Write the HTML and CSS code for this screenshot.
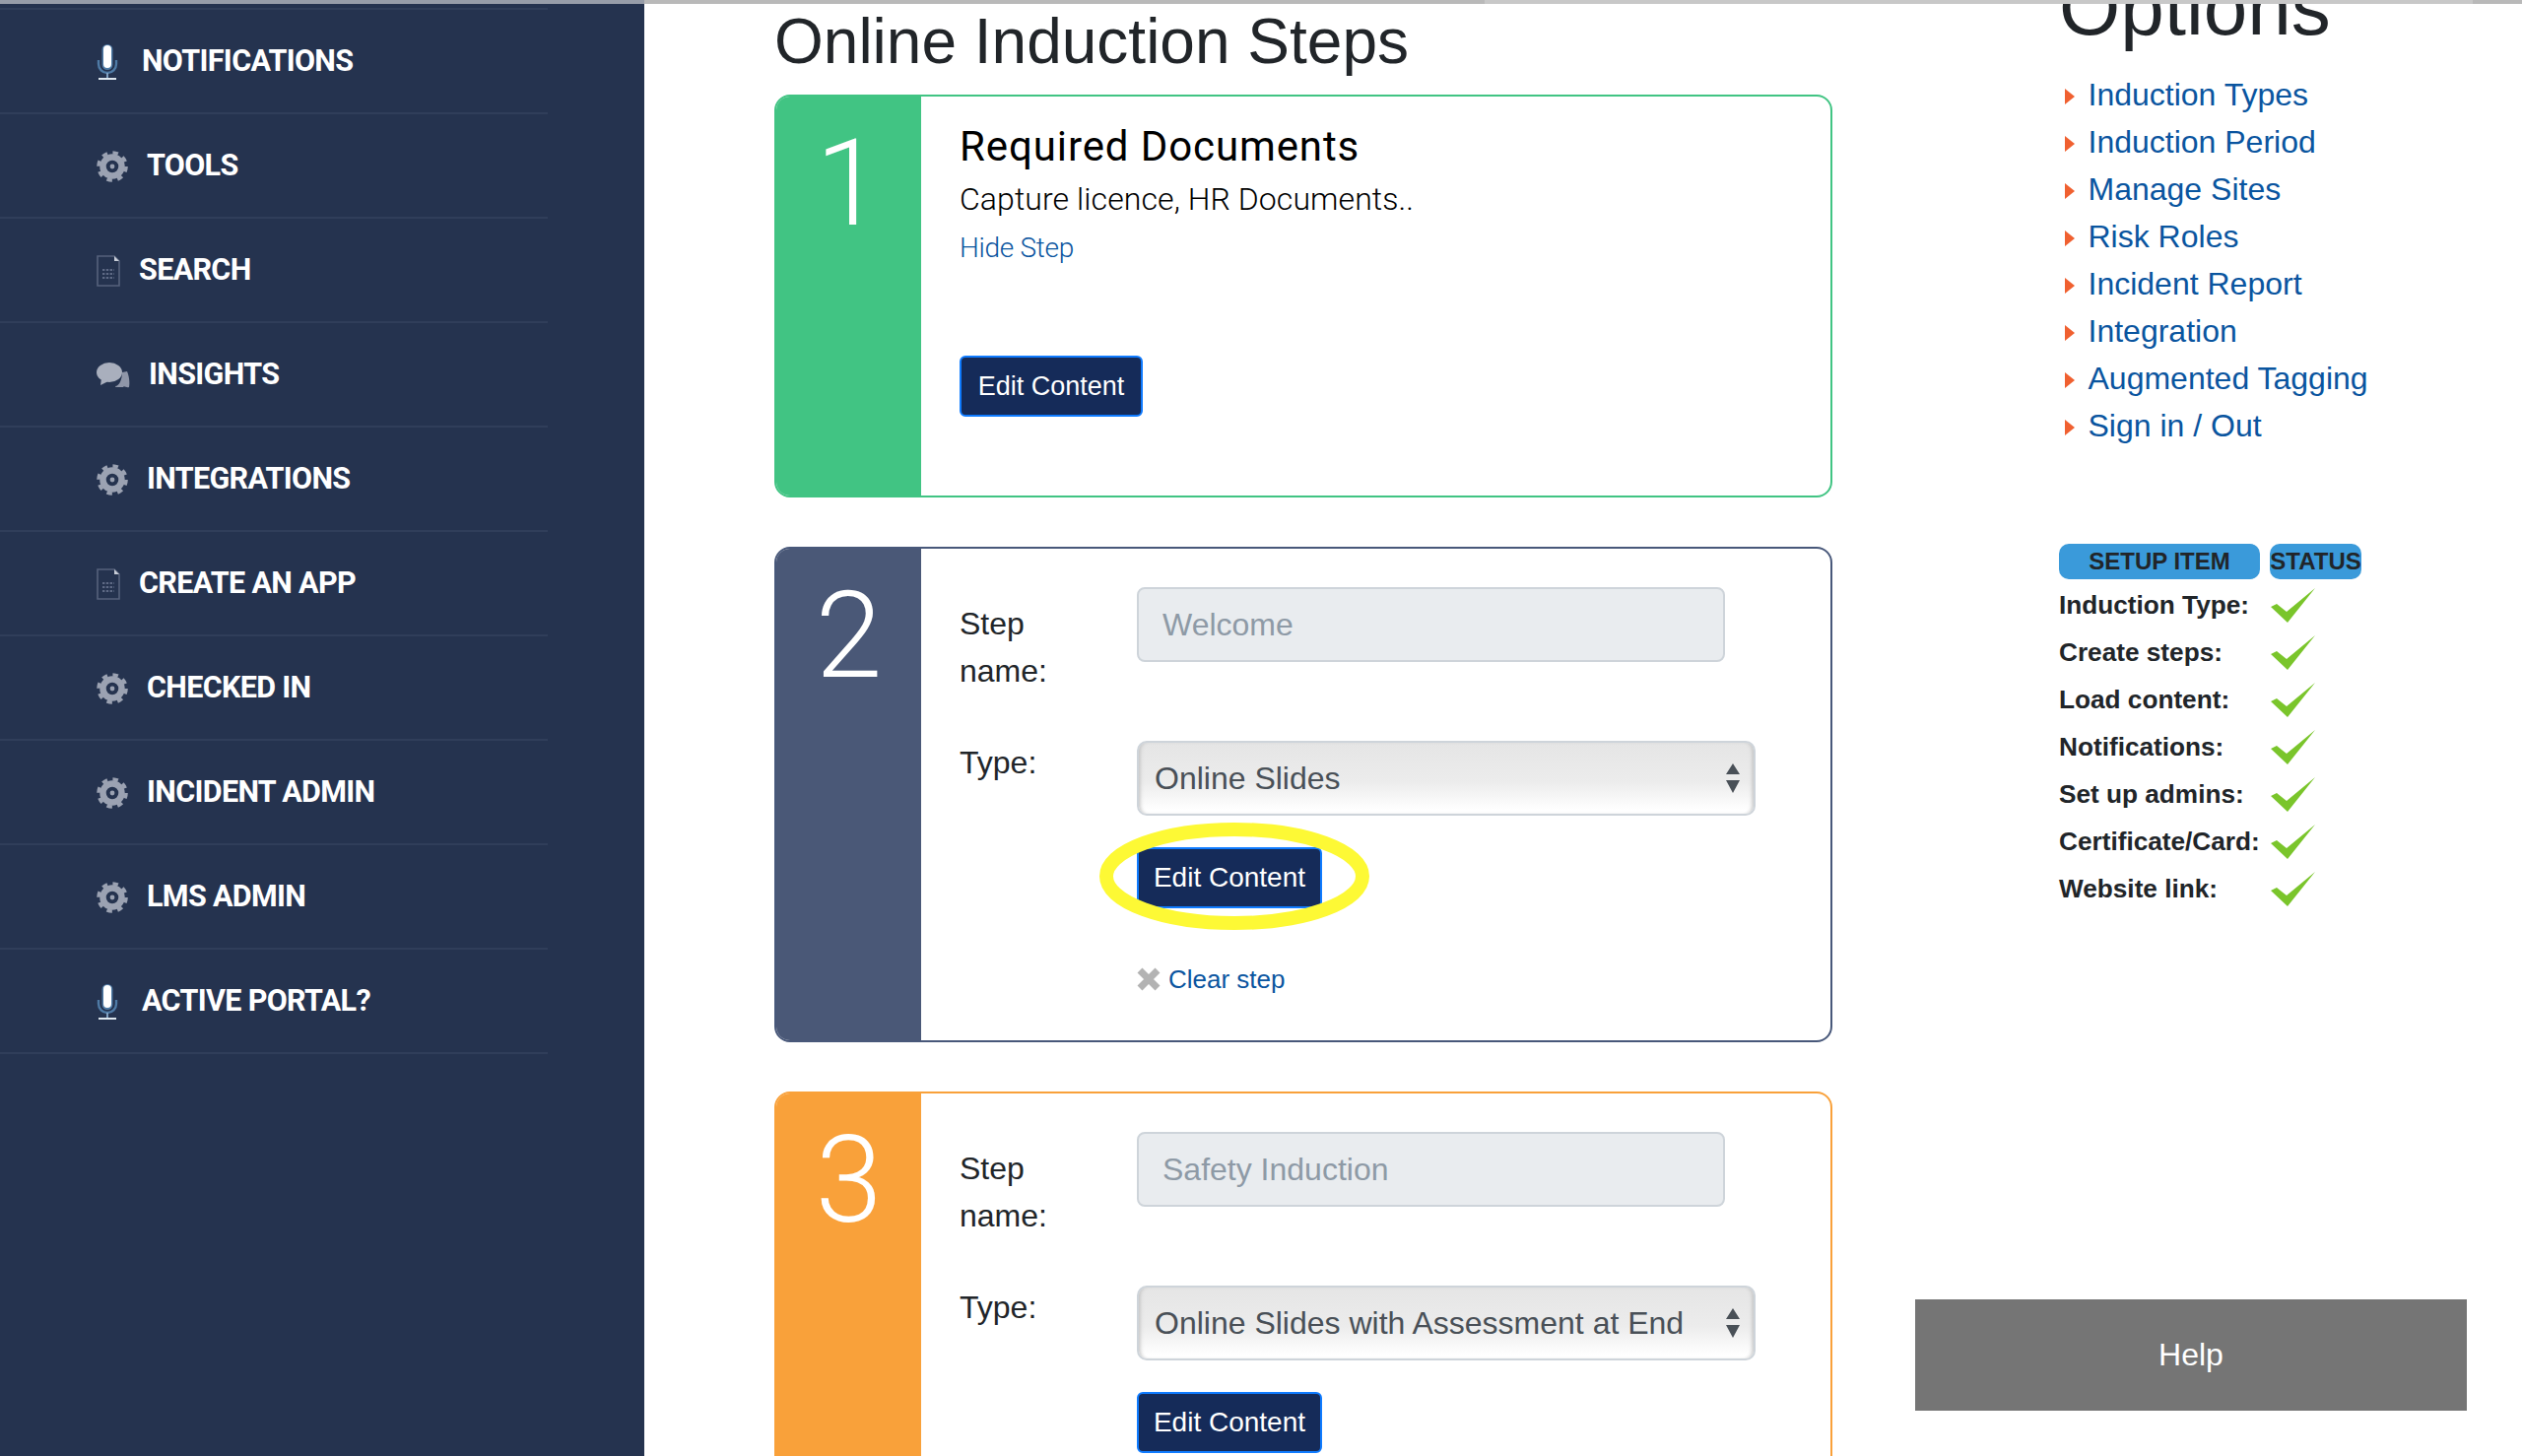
FILE: index.html
```html
<!DOCTYPE html>
<html lang="en">
<head>
<meta charset="utf-8">
<title>Online Induction Steps</title>
<link rel="stylesheet" href="styles.css">
</head>
<body>
<svg class="defs" width="0" height="0" aria-hidden="true">
  <symbol id="mic" viewBox="0 0 22 36">
    <path d="M2 16v4c0 5 4 9 9 9s9-4 9-9v-4" fill="none" stroke="#4f7ba6" stroke-width="2.4"/>
    <rect x="5.5" y="0" width="11" height="26" rx="5.5" fill="#4f7ba6"/>
    <rect x="7" y="1" width="8" height="23" rx="4" fill="#fff"/>
    <path d="M11 29v5" stroke="#7f9fc0" stroke-width="2"/>
    <path d="M2 35h18" stroke="#dfe8f0" stroke-width="2"/>
  </symbol>
  <symbol id="gear" viewBox="0 0 32 32">
    <circle cx="16" cy="16" r="14" fill="none" stroke="#9ba2b2" stroke-width="3.6" stroke-dasharray="5.5 5.5"/>
    <circle cx="16" cy="16" r="9.5" fill="none" stroke="#9ba2b2" stroke-width="6.5"/>
    <circle cx="16" cy="16" r="2.4" fill="#9ba2b2"/>
  </symbol>
  <symbol id="doc" viewBox="0 0 24 32">
    <path d="M1 1h17l5 5v25H1z" fill="none" stroke="#56627c" stroke-width="1.6"/>
    <path d="M18 1l5 5h-5z" fill="#c9ced8"/>
    <path d="M6 15h12M6 19h12M6 23h12" stroke="#5e6a85" stroke-width="2.2" stroke-dasharray="2.4 1.4"/>
  </symbol>
  <symbol id="chat" viewBox="0 0 34 26">
    <path d="M26 10l5-1c2 4 3 12 2 16-3 1-5-2-6 0l-6 0c-1 0-2 0-2-1 4 0 7-7 7-14z" fill="#8f96a8"/>
    <ellipse cx="13" cy="10" rx="13" ry="10" fill="#a9afbd"/>
    <path d="M5 16l-1 7 8-4z" fill="#a9afbd"/>
  </symbol>
  <symbol id="tick" viewBox="0 0 45 35">
    <path d="M0 19l6-3 10 8L45 0 17 35z" fill="#7ac52b"/>
  </symbol>
</svg>

<div class="topbar"></div>

<div class="page">
  <nav class="sidebar">
    <ul class="nav-list">
      <li class="nav-item"><svg class="ic ic-mic"><use href="#mic"/></svg><span>NOTIFICATIONS</span></li>
      <li class="nav-item"><svg class="ic ic-gear"><use href="#gear"/></svg><span>TOOLS</span></li>
      <li class="nav-item"><svg class="ic ic-doc"><use href="#doc"/></svg><span>SEARCH</span></li>
      <li class="nav-item"><svg class="ic ic-chat"><use href="#chat"/></svg><span>INSIGHTS</span></li>
      <li class="nav-item"><svg class="ic ic-gear"><use href="#gear"/></svg><span>INTEGRATIONS</span></li>
      <li class="nav-item"><svg class="ic ic-doc"><use href="#doc"/></svg><span>CREATE AN APP</span></li>
      <li class="nav-item"><svg class="ic ic-gear"><use href="#gear"/></svg><span>CHECKED IN</span></li>
      <li class="nav-item"><svg class="ic ic-gear"><use href="#gear"/></svg><span>INCIDENT ADMIN</span></li>
      <li class="nav-item"><svg class="ic ic-gear"><use href="#gear"/></svg><span>LMS ADMIN</span></li>
      <li class="nav-item"><svg class="ic ic-mic"><use href="#mic"/></svg><span>ACTIVE PORTAL?</span></li>
    </ul>
  </nav>

  <main class="main">
    <h1 class="title">Online Induction Steps</h1>

    <section class="card card-green">
      <div class="strip">1</div>
      <div class="body body-one">
        <h2 class="step-title">Required Documents</h2>
        <p class="step-desc">Capture licence, HR Documents..</p>
        <a class="hide-link" href="#">Hide Step</a>
        <button class="btn btn-first" type="button">Edit Content</button>
      </div>
    </section>

    <section class="card card-navy">
      <div class="strip">2</div>
      <div class="body">
        <div class="row row-name">
          <label class="lbl lbl-name">Step name:</label>
          <input class="field" type="text" value="Welcome" readonly>
        </div>
        <div class="row">
          <label class="lbl lbl-type">Type:</label>
          <div class="control">
            <div class="select-wrap">
              <select class="select"><option>Online Slides</option></select>
              <svg class="arrows" viewBox="0 0 14 30"><path d="M7 0l7 11H0zM0 17h14l-7 13z" fill="#495057"/></svg>
            </div>
            <div class="btn-wrap">
              <button class="btn" type="button">Edit Content</button>
              <svg class="ring" viewBox="0 0 274 109"><ellipse cx="137" cy="54.5" rx="130" ry="47.5" fill="none" stroke="#fdf935" stroke-width="14"/></svg>
            </div>
            <a class="clear" href="#"><svg class="clear-x" viewBox="0 0 24 24"><path d="M3 3l18 18M21 3L3 21" stroke="#b3b3b3" stroke-width="7"/></svg>Clear step</a>
          </div>
        </div>
      </div>
    </section>

    <section class="card card-orange">
      <div class="strip">3</div>
      <div class="body">
        <div class="row row-name">
          <label class="lbl lbl-name">Step name:</label>
          <input class="field" type="text" value="Safety Induction" readonly>
        </div>
        <div class="row">
          <label class="lbl lbl-type">Type:</label>
          <div class="control">
            <div class="select-wrap">
              <select class="select"><option>Online Slides with Assessment at End</option></select>
              <svg class="arrows" viewBox="0 0 14 30"><path d="M7 0l7 11H0zM0 17h14l-7 13z" fill="#495057"/></svg>
            </div>
            <div class="btn-wrap">
              <button class="btn" type="button">Edit Content</button>
            </div>
          </div>
        </div>
      </div>
    </section>
  </main>

  <aside class="aside">
    <h2 class="options-title">Options</h2>
    <ul class="options">
      <li><a href="#">Induction Types</a></li>
      <li><a href="#">Induction Period</a></li>
      <li><a href="#">Manage Sites</a></li>
      <li><a href="#">Risk Roles</a></li>
      <li><a href="#">Incident Report</a></li>
      <li><a href="#">Integration</a></li>
      <li><a href="#">Augmented Tagging</a></li>
      <li><a href="#">Sign in / Out</a></li>
    </ul>
    <div class="setup">
      <div class="pill">SETUP ITEM</div><div class="pill">STATUS</div>
      <div class="setup-label">Induction Type:</div><svg class="tick"><use href="#tick"/></svg>
      <div class="setup-label">Create steps:</div><svg class="tick"><use href="#tick"/></svg>
      <div class="setup-label">Load content:</div><svg class="tick"><use href="#tick"/></svg>
      <div class="setup-label">Notifications:</div><svg class="tick"><use href="#tick"/></svg>
      <div class="setup-label">Set up admins:</div><svg class="tick"><use href="#tick"/></svg>
      <div class="setup-label">Certificate/Card:</div><svg class="tick"><use href="#tick"/></svg>
      <div class="setup-label">Website link:</div><svg class="tick"><use href="#tick"/></svg>
    </div>
  </aside>
</div>

<div class="help">Help</div>
</body>
</html>
```
FILE: styles.css
```css
* { box-sizing: border-box; }
html, body { margin: 0; height: 1478px; overflow: hidden; }
body {
  position: relative;
  background: #fff;
  color: #212529;
  font-family: "Liberation Sans", Arial, sans-serif;
  font-size: 32px;
}
.defs { position: absolute; }

.topbar {
  position: relative;
  z-index: 5;
  height: 4px;
  background: linear-gradient(to right, #979da9 0 654px, #b9b9b9 654px 1507px, #c8c8c8 1507px 2510px, #b9b9b9 2510px);
}

.page { display: flex; height: 1474px; }

/* sidebar */
.sidebar { width: 654px; flex: none; background: #25334f; padding-top: 4px; }
.nav-list { list-style: none; margin: 0; padding: 0; width: 556px; border-top: 2px solid #303e5a; }
.nav-item {
  height: 106px;
  border-bottom: 2px solid #303e5a;
  padding: 0 0 2px 98px;
  display: flex;
  align-items: center;
  color: #fff;
  font-family: Roboto, sans-serif;
  font-weight: 700;
  font-size: 30.5px;
  letter-spacing: -0.65px;
}
.ic { flex: none; filter: blur(.4px); margin-top: 4px; }
.ic-mic { width: 22px; height: 36px; margin-right: 24px; }
.ic-gear { width: 32px; height: 32px; margin-right: 19px; }
.ic-doc { width: 24px; height: 32px; margin-right: 19px; }
.ic-chat { width: 34px; height: 26px; margin-right: 19px; }

/* main column */
.main { width: 1074px; margin-left: 132px; flex: none; }
.title { margin: 0 0 16px; font-size: 64px; font-weight: 400; line-height: 76px; }

.card {
  display: flex;
  border: 2px solid;
  border-radius: 16px;
  overflow: hidden;
  margin-bottom: 50px;
  background: #fff;
}
.card-green { border-color: #41c483; height: 409px; }
.card-navy { border-color: #48587a; height: 503px; }
.card-orange { border-color: #f9a13a; height: 520px; }
.card-green .strip { background: #41c483; }
.card-navy .strip { background: #4a5877; }
.card-orange .strip { background: #f9a13a; }

.strip {
  width: 147px;
  flex: none;
  color: #fff;
  text-align: center;
  font-family: Roboto, sans-serif;
  font-weight: 300;
  font-size: 122px;
  line-height: 140px;
  padding-top: 19px;
}
.body { flex: 1; padding: 39px 0 0 39px; }
.body-one { padding-top: 26px; }

.step-title { margin: 0; font-family: Roboto, sans-serif; font-weight: 400; font-size: 42px; line-height: 50px; letter-spacing: .9px; color: #000; }
.step-desc { margin: 6px 0 0; font-family: Roboto, sans-serif; font-weight: 300; font-size: 32px; line-height: 44px; letter-spacing: .08px; color: #000; }
.hide-link { display: block; margin-top: 8px; font-family: Roboto, sans-serif; font-weight: 300; font-size: 28px; line-height: 40px; letter-spacing: -.3px; color: #0a559f; text-decoration: none; }

.btn {
  display: block;
  height: 62px;
  width: 188px;
  padding: 0;
  border: 2px solid #0f7bff;
  border-radius: 6px;
  background: #152b59;
  color: #fff;
  font-family: "Liberation Sans", Arial, sans-serif;
  font-size: 28px;
}
.btn-first { width: 186px; margin-top: 89px; font-size: 27px; }

.row { display: flex; }
.row-name { margin-bottom: 47px; }
.lbl { display: block; width: 180px; flex: none; line-height: 48px; }
.lbl-name { padding: 13px 60px 0 0; }
.lbl-type { margin-top: -2px; }
.field {
  display: block;
  width: 597px;
  height: 76px;
  border: 2px solid #ced4da;
  border-radius: 8px;
  background: #e9ecef;
  color: #8e9aa6;
  font: 32px "Liberation Sans", Arial, sans-serif;
  padding: 0 24px;
  outline: none;
}
.control { width: 628px; }
.select-wrap { position: relative; height: 76px; }
.select {
  appearance: none;
  display: block;
  width: 628px;
  height: 76px;
  border: 2px solid #ced4da;
  border-radius: 10px;
  background: linear-gradient(to bottom, #e5e5e5 0%, #ececec 55%, #fff 95%);
  box-shadow: inset 4px 0 4px -3px #bbb, inset -4px 0 4px -3px #bbb;
  color: #495057;
  font: 32px "Liberation Sans", Arial, sans-serif;
  padding: 0 16px;
}
.arrows { position: absolute; right: 16px; top: 23px; width: 14px; height: 30px; }
.btn-wrap { position: relative; margin-top: 32px; width: 188px; }
.ring { position: absolute; left: -38px; top: -25px; width: 274px; height: 109px; }
.clear {
  display: flex;
  align-items: center;
  gap: 8px;
  margin-top: 54px;
  font-size: 26px;
  line-height: 36px;
  color: #0a559f;
  text-decoration: none;
}
.clear-x { width: 24px; height: 24px; filter: blur(.6px); }

/* right column */
.aside { margin-left: 230px; margin-top: -44px; width: 420px; flex: none; }
.options-title { margin: 0 0 16px; font-size: 80px; font-weight: 400; line-height: 96px; }
.options { list-style: none; margin: 0 0 96px; padding: 0; }
.options li { position: relative; padding-left: 29.5px; height: 48px; line-height: 48px; }
.options li::before {
  content: "";
  position: absolute;
  left: 6px;
  top: 18px;
  border-left: 10px solid #f06030;
  border-top: 8px solid transparent;
  border-bottom: 8px solid transparent;
}
.options a { color: #0a559f; text-decoration: none; }

.setup { display: grid; grid-template-columns: 204px 93px; column-gap: 10px; grid-auto-rows: 48px; }
.pill {
  height: 36px;
  border-radius: 10px;
  background: #3a9ada;
  text-align: center;
  font-size: 24px;
  font-weight: 700;
  line-height: 36px;
}
.setup-label { font-size: 26.2px; font-weight: 700; line-height: 48px; white-space: nowrap; margin-top: -10px; }
.tick { width: 45px; height: 35px; margin: -3px 0 0 1px; filter: blur(.4px); }

.help {
  position: absolute;
  left: 1944px;
  top: 1319px;
  width: 560px;
  height: 113px;
  background: #757575;
  color: #fff;
  text-align: center;
  line-height: 113px;
}
```
